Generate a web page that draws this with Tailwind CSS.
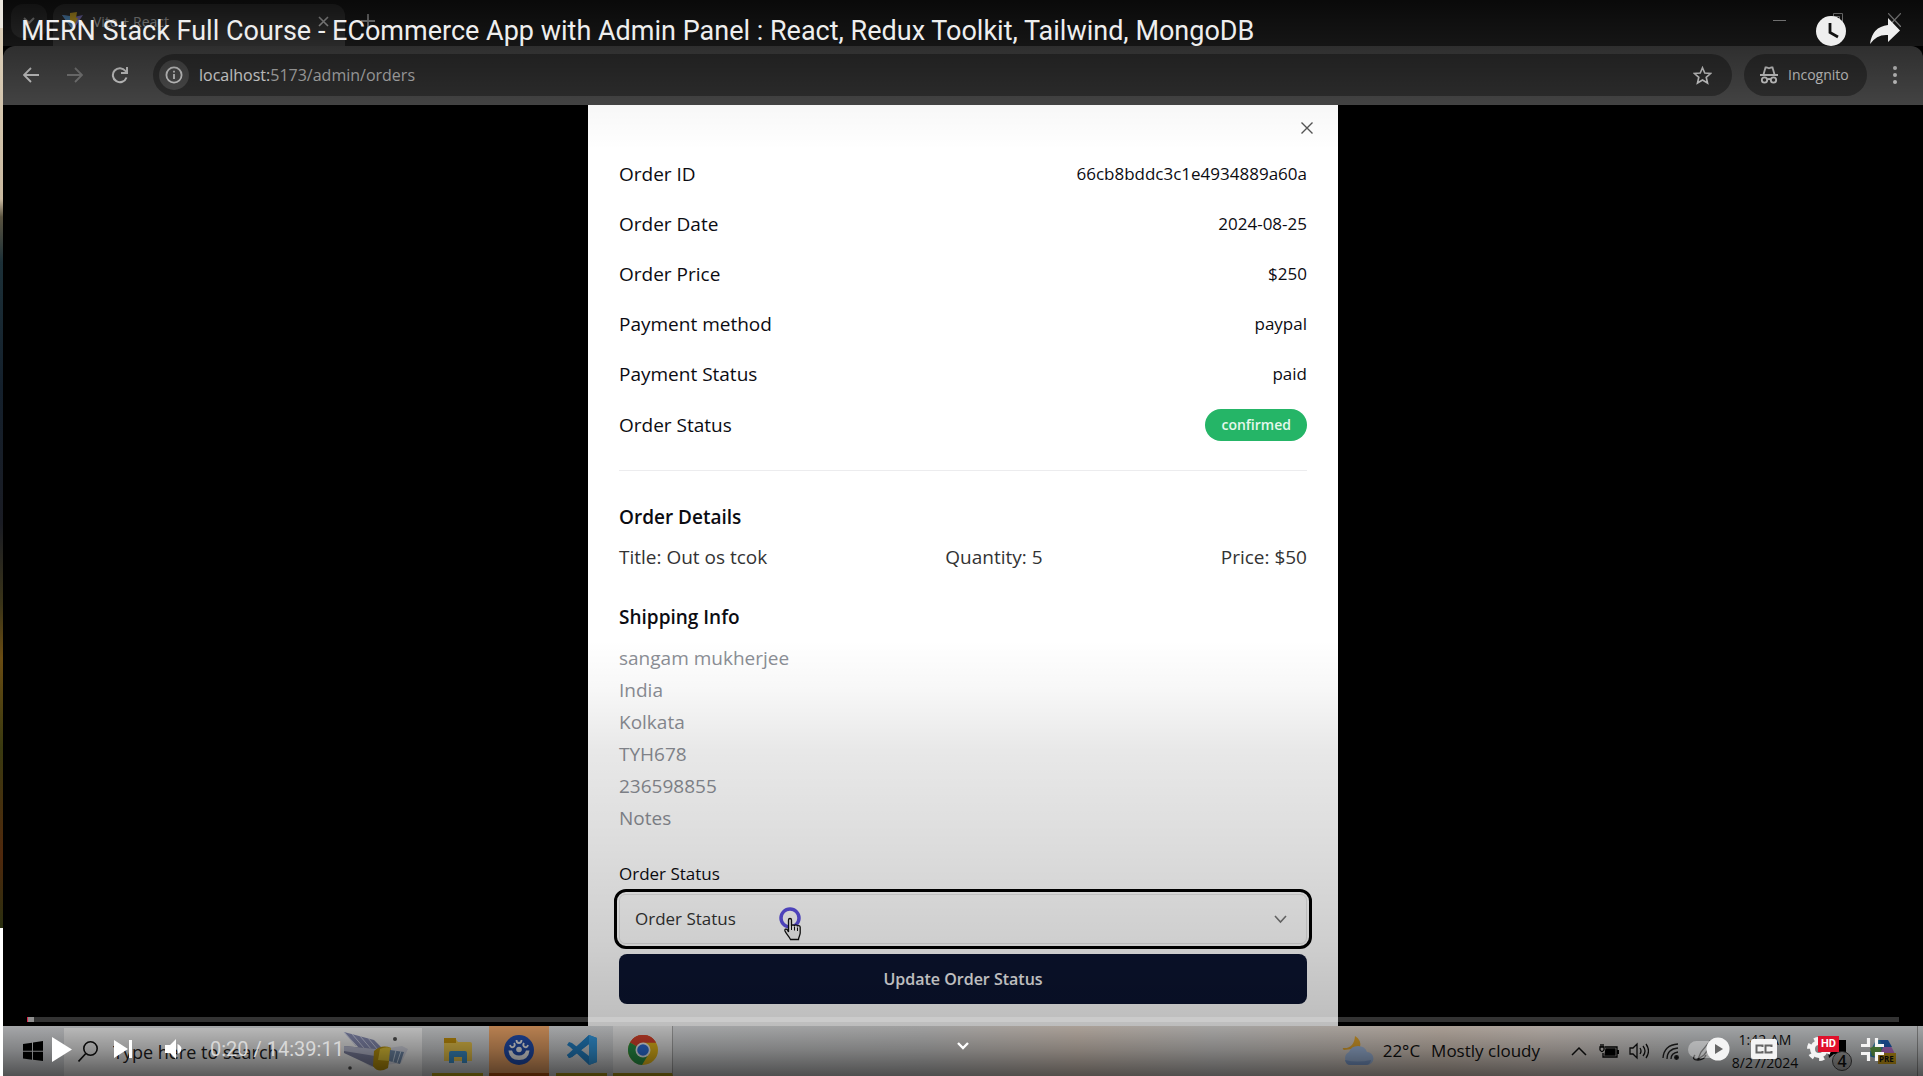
<!DOCTYPE html>
<html lang="en">
<head>
<meta charset="utf-8">
<title>MERN Stack Full Course</title>
<script src="https://cdn.jsdelivr.net/npm/@tailwindcss/browser@4"></script>
</head>
<body class="bg-black font-['Open_Sans','Noto_Sans',sans-serif] overflow-hidden">
<div class="relative flex min-h-screen">
  <!-- desktop wallpaper edge -->
  <div class="flex w-[3px] shrink-0 flex-col">
    <div class="h-7 bg-[#ebe7df]"></div>
    <div class="h-[900px] bg-[linear-gradient(#dccfb9,#c9b9a0_19%,#5a5340_21%,#1c3038_26%,#14202c_40%,#1a1c24_55%,#3a3418_64%,#6a4c12_70%,#3a3a10_80%,#50280c_92%,#2a3010)]"></div>
    <div class="flex-1 bg-white"></div>
  </div>

  <div class="flex min-w-0 flex-1 flex-col">
    <!-- browser tabs -->
    <header class="flex h-[46px] items-start bg-[#202020] pl-2 pt-1">
      <button aria-label="Search tabs" class="flex h-[34px] w-9 items-center justify-center rounded-xl bg-[#363636] text-[#b4b4b4]">
        <svg width="12" height="12" viewBox="0 0 12 12" fill="none" stroke="currentColor" stroke-width="2"><path d="M1 3l5 5 5-5"/></svg>
      </button>
      <div class="ml-[6px] flex h-[42px] w-[292px] items-start rounded-t-xl bg-[#3e3e3e] pl-[9px] pr-4 pt-1">
        <svg class="mt-1" width="21" height="18" viewBox="0 0 21 18"><path d="M0 3l11 15L21 3l-9 2z" fill="#a294f0"/><path d="M0 3l11 15L8 4z" fill="#6ab8f8"/><path d="M8 1l7-1-1 6h2l-5 10-1-6H8z" fill="#ffd030"/></svg>
        <span class="ml-[10px] flex-1 text-sm leading-7 text-[#d8d8d8]">Vite + React</span>
        <button aria-label="Close tab" class="mt-2 text-[#eee]"><svg width="11" height="11" viewBox="0 0 11 11" stroke="currentColor" stroke-width="1.6"><path d="M1 1l9 9M10 1l-9 9"/></svg></button>
      </div>
      <button aria-label="New tab" class="ml-4 mt-[10px] text-[#ccc]"><svg width="14" height="14" viewBox="0 0 14 14" stroke="currentColor" stroke-width="1.8"><path d="M7 0v14M0 7h14"/></svg></button>
      <div class="ml-auto mr-[22px] mt-[9px] flex gap-[45px] text-[#f0f0f0]">
        <button aria-label="Minimize"><svg width="13" height="14" viewBox="0 0 13 14" stroke="currentColor" fill="none"><path d="M0 7.5h13"/></svg></button>
        <button aria-label="Restore"><svg width="12" height="14" viewBox="0 0 12 14" stroke="currentColor" fill="none"><path d="M.5 3.500h8v9h-8zM2.500 3.500v-3h9v9h-3"/></svg></button>
        <button aria-label="Close"><svg width="13" height="14" viewBox="0 0 13 14" stroke="currentColor" stroke-width="1.200" fill="none"><path d="M0 0l13 14M13 0L0 14"/></svg></button>
      </div>
    </header>

    <!-- address bar -->
    <nav class="flex h-[59px] items-center rounded-t-xl bg-[#454545] pb-px pl-5 pr-[26px] text-[#d0d0d0]">
      <button aria-label="Back"><svg width="16" height="16" viewBox="0 0 16 16" fill="none" stroke="currentColor" stroke-width="1.800"><path d="M8 1L1 8l7 7M1 8h15"/></svg></button>
      <button aria-label="Forward" class="ml-7 text-[#7c7c7c]"><svg width="16" height="16" viewBox="0 0 16 16" fill="none" stroke="currentColor" stroke-width="1.800"><path d="M8 1l7 7-7 7M15 8H0"/></svg></button>
      <button aria-label="Reload" class="ml-7"><svg width="18" height="18" viewBox="0 0 18 18" fill="none" stroke="currentColor" stroke-width="2"><path d="M15.500 11.500A7 7 0 1 1 14.500 5L16 7"/><path d="M16 1v6h-6"/></svg></button>
      <div class="ml-6 flex h-[42px] min-w-0 flex-1 items-center rounded-full bg-[#2d2d2d] pl-[6px] pr-5">
        <span class="flex size-[30px] items-center justify-center rounded-full bg-[#4a4a4a]">
          <svg width="18" height="18" viewBox="0 0 18 18" fill="none" stroke="currentColor" stroke-width="1.800"><circle cx="9" cy="9" r="7.600"/><path d="M9 8v5M9 4.800v1.800"/></svg>
        </span>
        <div role="textbox" aria-label="Address" class="ml-[10px] flex-1 text-base text-[#b4b4b4]"><span class="text-[#e2e2e2]">localhost:</span>5173/admin/orders</div>
        <button aria-label="Bookmark"><svg width="19" height="19" viewBox="0 0 20 20" fill="none" stroke="currentColor" stroke-width="1.700"><path d="M10 1.800l2.400 5.600 6.100.5-4.600 4 1.400 6L10 14.700l-5.300 3.200 1.400-6-4.600-4 6.100-.5z"/></svg></button>
      </div>
      <button class="ml-3 flex h-[42px] w-[123px] items-center rounded-full bg-[#2d2d2d] pl-4 text-sm">
        <svg class="mr-[10px]" width="18" height="18" viewBox="0 0 18 18" fill="none" stroke="currentColor" stroke-width="1.800"><path d="M0 9h18M3.500 8.500L5.500 1.500h1.200l2.300.8 2.300-.8h1.200l2 7"/><circle cx="4.500" cy="14" r="2.700"/><circle cx="13.500" cy="14" r="2.700"/><path d="M7 13.500q2-1 4 0"/></svg>Incognito</button>
      <button aria-label="Menu" class="ml-[26px]"><svg width="4" height="18" viewBox="0 0 4 18" fill="currentColor"><circle cx="2" cy="2" r="2"/><circle cx="2" cy="9" r="2"/><circle cx="2" cy="16" r="2"/></svg></button>
    </nav>

    <!-- page -->
    <main class="flex flex-1 justify-center bg-black">
      <section class="relative w-[750px] bg-white px-[31px] pt-11 text-[#0c0c12]">
        <button aria-label="Close dialog" class="absolute right-[25px] top-[17px] text-[#555]"><svg width="12" height="12" viewBox="0 0 12 12" stroke="currentColor" stroke-width="1.400"><path d="M.500.500l11 11M11.500.500l-11 11"/></svg></button>
        <dl class="font-medium">
          <div class="flex h-[50px] items-center justify-between"><dt class="text-[19px]">Order ID</dt><dd class="text-[17px]">66cb8bddc3c1e4934889a60a</dd></div>
          <div class="flex h-[50px] items-center justify-between"><dt class="text-[19px]">Order Date</dt><dd class="text-[17px]">2024-08-25</dd></div>
          <div class="flex h-[50px] items-center justify-between"><dt class="text-[19px]">Order Price</dt><dd class="text-[17px]">$250</dd></div>
          <div class="flex h-[50px] items-center justify-between"><dt class="text-[19px]">Payment method</dt><dd class="text-[17px]">paypal</dd></div>
          <div class="flex h-[50px] items-center justify-between"><dt class="text-[19px]">Payment Status</dt><dd class="text-[17px]">paid</dd></div>
          <div class="flex h-[52px] items-center justify-between"><dt class="text-[19px]">Order Status</dt><dd class="flex h-8 items-center rounded-full bg-[#25b567] px-4 text-sm font-semibold text-[#e4f8ec]">confirmed</dd></div>
        </dl>
        <hr class="mt-[19px] border-[#ececee]">
        <h2 class="mt-[31px] text-[19px] leading-[30px] font-semibold">Order Details</h2>
        <ul class="mt-[10px]"><li class="flex justify-between text-[19px] leading-[30px] text-[#333]"><span>Title: Out os tcok</span><span>Quantity: 5</span><span>Price: $50</span></li></ul>
        <h2 class="mt-[30px] text-[19px] leading-[30px] font-semibold">Shipping Info</h2>
        <div class="mt-[10px] flex flex-col text-[19px] leading-8 text-[#8b8e95]">
          <span>sangam mukherjee</span><span>India</span><span>Kolkata</span><span>TYH678</span><span>236598855</span><span>Notes</span>
        </div>
        <form>
          <label for="status" class="mt-7 block text-[17px] leading-6 font-medium">Order Status</label>
          <div class="relative -mx-[5px] mt-[3px] h-[60px] rounded-xl border-[3px] border-black p-[2px]">
            <select id="status" class="h-full w-full appearance-none rounded-md border border-black/10 px-[15px] text-[17px] text-[#333] outline-none"><option>Order Status</option></select>
            <svg class="absolute right-[22px] top-[23px]" width="13" height="9" viewBox="0 0 13 9" fill="none" stroke="#777" stroke-width="1.600"><path d="M1 1l5.500 6L12 1"/></svg>
            <!-- click ring and hand pointer -->
            <svg class="absolute left-[161px] top-3" width="28" height="40" viewBox="0 0 28 40" fill="none"><circle cx="12" cy="14" r="9" stroke="#5c50e0" stroke-width="3.500"/><path d="M10.500 28V16c0-2 3-2 3 0v6c0-1.500 3-1.500 3 0 0-1.500 3-1.500 3 .5 0-1.500 2.700-1 2.700.8V29c0 2-1.700 4-1.700 6.500h-8c-2-4-4-5-5.500-8.500-.700-2 1.500-2.500 2.500-1z" fill="#f4f4f4" stroke="#111" stroke-width="1.300"/><path d="M13.500 22v4M16.500 22.500v4M19.500 23.500V27" stroke="#111"/></svg>
          </div>
          <button type="button" class="mt-[5px] h-[50px] w-full rounded-lg bg-[#0b1430] text-base font-semibold text-[#f4f4f6]">Update Order Status</button>
        </form>
      </section>
    </main>

    <!-- taskbar -->
    <footer class="flex h-[50px] items-center bg-[linear-gradient(90deg,#dfe1e4,#dcdee0_35%,#d8d8d8_48%,#e6d8cc_56%,#dedcda_63%,#e4d5c8_75%,#e8ddd5_80%,#dbdee0_88%)] pl-5 text-[#111]">
      <button aria-label="Start"><svg width="20" height="20" viewBox="0 0 20 20" fill="#000"><path d="M0 3l9-1.300v8H0zM10 1.500L20 0v9.700H10zM0 10.700h9v8.100L0 17.500zM10 10.700h10V20l-10-1.300z"/></svg></button>
      <div class="ml-[21px] mt-px flex h-12 w-[358px] items-center bg-[#fcfcfc] pl-[14px]">
        <svg width="20" height="21" viewBox="0 0 20 21" fill="none" stroke="#111" stroke-width="1.600"><circle cx="12.500" cy="7.500" r="6.700"/><path d="M7.800 12.500L.500 20.500"/></svg>
        <input aria-label="Search" class="ml-[15px] w-[200px] text-lg text-[#222] placeholder:text-[#222] outline-none" placeholder="Type here to search">
        <svg class="ml-[19px]" width="80" height="44" viewBox="0 0 80 44"><path d="M18 24l52-8 6 3-7 14-30 4z" fill="#c8cce4" opacity=".5"/><path d="M12 2l30 8 12 12-26-3z" fill="#8e94bc"/><path d="M12 2l12 14M20 4l12 14M28 6l12 14M36 8l10 12" stroke="#d4d8ee"/><path d="M12 16l32 3-2 18-30-14z" fill="#8488a8"/><path d="M12 16l32 3-1 7-31-5z" fill="#c5c8de"/><path d="M42 21q8-7 17-3l-3 20q-10 6-15-2z" fill="#c39b10"/><path d="M48 19q6-3 11-1l-2 13-11-1z" fill="#f2d23c"/><path d="M58 20l14 2-4 12-11-3z" fill="#7792b4"/><path d="M64 20l-3 12M69 21l-4 12" stroke="#d3e3f4"/><circle cx="63" cy="9" r="2" fill="#555"/><circle cx="18" cy="38" r="1.800" fill="#555"/></svg>
      </div>
      <div class="ml-[10px] flex h-full">
        <button aria-label="File Explorer" class="flex h-full w-[51px] items-center justify-center border-b-[3px] border-[#c8ae18]"><svg width="28" height="26" viewBox="0 0 28 26"><path d="M0 3q0-2 2-2h9l3 4h12q2 0 2 2v17H0z" fill="#f5cf50"/><path d="M0 1h12v5H0z" fill="#cf9a0c"/><path d="M5 26V16q0-2 2-2h14q2 0 2 2v10h-5v-6h-8v6z" fill="#3f96d2"/></svg></button>
        <button aria-label="Cluster tool" class="ml-[6px] flex h-full w-[60px] items-center justify-center border-b-[3px] border-[#c05a10] bg-[#f7ac6c]"><svg width="30" height="30" viewBox="0 0 30 30" fill="none"><circle cx="15" cy="15" r="15" fill="#2452b8"/><circle cx="15" cy="14.500" r="2.800" fill="#fff"/><path d="M4.500 15.500h3.500q1.500 5 7 5t7-5h3.500q-1 9.500-10.500 9.500T4.500 15.500z" fill="#fff"/><path d="M12.500 5q0 3 2.500 3t2.500-3M6 10q1 3.500 4 1.500 1.500-1.500 0-3.500M24 10q-1 3.500-4 1.500-1.500-1.500 0-3.500" stroke="#fff" stroke-width="1.800"/></svg></button>
        <button aria-label="VS Code" class="ml-[7px] flex h-full w-[51px] items-center justify-center border-b-[3px] border-[#b9a018]"><svg width="30" height="30" viewBox="0 0 30 30"><path d="M22 0l8 3v24l-8 3L3 12l-3-2 2-3 3 1 17 13V9L5 22l-3 1-2-3 3-2z" fill="#2588d0"/><path d="M0 20L22 0v9L5 22l-3 1z" fill="#2588d0"/><path d="M22 0l8 3v24l-8 3z" fill="#36a2ec"/></svg></button>
        <button aria-label="Chrome" class="ml-[6px] flex h-full w-[60px] items-center justify-center border-b-[3px] border-r border-b-[#b9a018] border-r-[#aaa] bg-[#f0f0f0]"><svg width="30" height="30" viewBox="0 0 30 30"><circle cx="15" cy="15" r="15" fill="#f2c21c"/><path d="M15 15L2 7.500A15 15 0 0 1 28 7.500H15z" fill="#e0452f"/><path d="M2 7.500A15 15 0 0 0 14 30l7-11.500-6-3.500z" fill="#2b9a4b"/><path d="M2 7.500A15 15 0 0 1 28 7.500H13z" fill="#e0452f"/><circle cx="15" cy="15" r="7.500" fill="#fff"/><circle cx="15" cy="15" r="5.800" fill="#2f76e8"/></svg></button>
      </div>
      <div class="ml-auto flex items-center">
        <svg width="32" height="30" viewBox="0 0 32 30"><path d="M13 0q7 4 5 12L2 14q-2-1-1-2 11 1 12-12z" fill="#f0b030"/><path d="M8 29a7 7 0 0 1-1-13q2-6 9-6t9 6a6.500 6.500 0 0 1 0 13z" fill="#a9c4ec"/><path d="M3 24q12 3 26 0-1 5-5 5H8q-4 0-5-5z" fill="#86a8dc"/></svg>
        <span class="ml-[9px] text-[17px]">22°C</span><span class="ml-[11px] text-[17px]">Mostly cloudy</span>
        <svg class="ml-[31px]" width="16" height="10" viewBox="0 0 16 10" fill="none" stroke="#111" stroke-width="1.500"><path d="M1 9l7-7 7 7"/></svg>
        <svg class="ml-3" width="20" height="15" viewBox="0 0 20 15" fill="none" stroke="#000" stroke-width="1.300"><path d="M6 3h12v10H4V9M19.300 6v4M1 3h4v3q-2 3-4 0zM2 3V0M4 3V0"/><path d="M7 5h9v6H6z" fill="#000"/></svg>
        <svg class="ml-[10px]" width="20" height="18" viewBox="0 0 20 18" fill="none" stroke="#111" stroke-width="1.300"><path d="M1 6h3l4-4v14l-4-4H1zM11 6q2 3 0 6M14 4q4 5 0 10M17 2q5 7 0 14"/></svg>
        <svg class="ml-[13px]" width="17" height="17" viewBox="0 0 17 17" fill="none" stroke="#222" stroke-width="1.300"><path d="M1 15Q2 2 16 1M5 16Q5 6 16 5M9 16q0-6 7-7"/><circle cx="14.500" cy="14.500" r="1.800" fill="#111"/></svg>
        <svg class="ml-3" width="26" height="22" viewBox="0 0 26 22" fill="none" stroke="#222" stroke-width="1.300"><path d="M7 19l3-7 9-11 3 2-9 12zM4 15q-4 5 3 5 6 0 8-5"/></svg>
        <div class="ml-[10px] flex w-[76px] flex-col items-center text-sm leading-[23px]"><span>1:42 AM</span><span>8/27/2024</span></div>
        <div class="relative ml-[19px] size-8"><svg width="32" height="32" viewBox="0 0 32 32"><path d="M4 5h20v14H12l-5 4z" fill="#000"/></svg><span class="absolute left-[10px] top-4 flex size-5 items-center justify-center rounded-full border border-[#444] bg-[#b4b4b4] text-base font-semibold">4</span></div>
        <svg class="ml-[14px]" width="29" height="26" viewBox="0 0 29 26"><path d="M8 2h10l5 7-9 3-6 8-8-2z" fill="#2f8fc8"/><path d="M2 10l10-4 3 12H4z" fill="#6cb352"/><path d="M18 2l6 8 4 8-12 4-3-8z" fill="#c678d8"/><path d="M12 2h8l4 7h-9z" fill="#2569c8"/><rect x="10" y="15" width="18" height="11" fill="#d8a718"/><text x="11" y="24" font-size="8" font-weight="700" font-family="Open Sans" fill="#111">PRE</text></svg>
        <div class="ml-[20px] h-[50px] w-[6px] border-l border-[#999]"></div>
      </div>
    </footer>
  </div>

  <!-- player shading -->
  <div class="pointer-events-none absolute inset-x-0 left-[3px] top-0 h-[150px] bg-[linear-gradient(rgb(0_0_0/.7),rgb(0_0_0/.3)_50px,rgb(0_0_0/.03)_105px,transparent)]"></div>
  <div class="pointer-events-none absolute bottom-0 left-[3px] right-0 h-[436px] bg-[linear-gradient(transparent,rgb(0_0_0/.03)_50px,rgb(0_0_0/.09)_110px,rgb(0_0_0/.135)_200px,rgb(0_0_0/.19)_300px,rgb(0_0_0/.26)_386px,rgb(0_0_0/.42)_410px,rgb(0_0_0/.64))]"></div>

  <!-- player title -->
  <div class="absolute inset-x-0 top-0 flex h-[62px] items-center pl-[21px] pr-[23px] font-['Roboto',sans-serif] text-[#eee]">
    <h1 class="flex-1 text-[27px]">MERN Stack Full Course - ECommerce App with Admin Panel : React, Redux Toolkit, Tailwind, MongoDB</h1>
    <button aria-label="Watch later"><svg width="30" height="30" viewBox="0 0 30 30"><circle cx="15" cy="15" r="15" fill="#eee"/><path d="M14 7v9.500l8 4.500" fill="none" stroke="#111" stroke-width="2.800"/></svg></button>
    <button aria-label="Share" class="ml-6"><svg width="30" height="26" viewBox="0 0 30 26" fill="#eee"><path d="M18 0l12 12.500L18 24v-7Q7 16 0 26 2 9 18 7z"/></svg></button>
  </div>

  <!-- player controls -->
  <div class="absolute bottom-[54px] left-[27px] right-6 flex h-[5px] bg-white/20"><div class="w-px bg-[#e0224a]"></div><div class="w-[6px] bg-white/45"></div></div>
  <div class="absolute bottom-0 left-[52px] right-[39px] flex h-[54px] items-center font-['Roboto',sans-serif] text-white">
    <button aria-label="Play"><svg width="20" height="25" viewBox="0 0 20 25" fill="#fff"><path d="M0 0l20 12.500L0 25z"/></svg></button>
    <button aria-label="Next" class="ml-[42px]"><svg width="18" height="18" viewBox="0 0 18 18" fill="#fff"><path d="M0 0l14 9L0 18zM15 0h3v18h-3z"/></svg></button>
    <button aria-label="Mute" class="ml-[33px]"><svg width="17" height="20" viewBox="0 0 17 20" fill="#fff"><path d="M0 6h5l6-6v20l-6-6H0zM12.500 5q4 2 4 5t-4 5z"/></svg></button>
    <span class="ml-7 text-xl text-[#d8d8d8]">0:20 / 14:39:11</span>
    <button aria-label="Autoplay" class="ml-auto"><svg width="42" height="24" viewBox="0 0 42 24"><rect y="4" width="36" height="17" rx="8.500" fill="#fff" opacity=".35"/><circle cx="30" cy="12" r="11.500" fill="#f4f4f4"/><path d="M27 7l8 5-8 5z" fill="#666"/></svg></button>
    <button aria-label="Captions" class="ml-[21px]"><svg width="26" height="20" viewBox="0 0 26 20"><rect width="26" height="20" rx="2" fill="#f4f4f4"/><path d="M11.500 8V6.500h-6v7h6V12M20.500 8V6.500h-6v7h6V12" fill="none" stroke="#666" stroke-width="2"/></svg></button>
    <button aria-label="Settings" class="relative ml-[30px]"><svg width="24" height="24" viewBox="0 0 24 24" fill="none"><circle cx="12" cy="12" r="6.500" stroke="#f4f4f4" stroke-width="5"/><circle cx="12" cy="12" r="10" stroke="#f4f4f4" stroke-width="4" stroke-dasharray="5 5.472"/></svg><span class="absolute -top-[1px] left-[11px] bg-[#e0102c] px-[3px] text-[11px] leading-4 font-bold text-white">HD</span></button>
    <button aria-label="Exit full screen" class="ml-[30px]"><svg width="23" height="23" viewBox="0 0 23 23" fill="none" stroke="#f4f4f4" stroke-width="3.200"><path d="M0 7.500h7.500V0M15.500 0v7.500H23M23 15.500h-7.500V23M7.500 23v-7.500H0"/></svg></button>
  </div>
  <button aria-label="More videos" class="absolute bottom-[25px] left-[957px]"><svg width="12" height="10" viewBox="0 0 12 10" fill="none" stroke="#fff" stroke-width="2.400"><path d="M1 2l5 5 5-5"/></svg></button>
</div>
</body>
</html>
